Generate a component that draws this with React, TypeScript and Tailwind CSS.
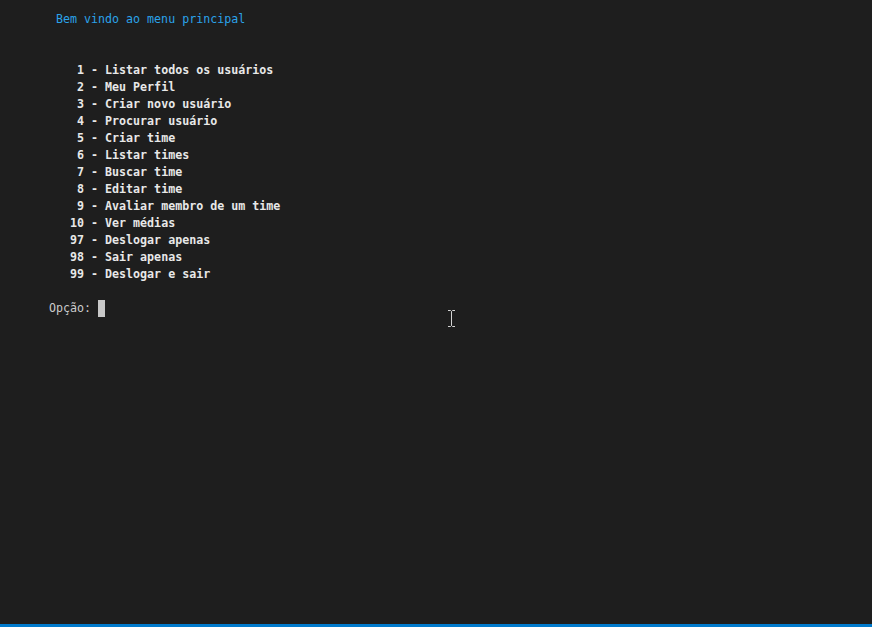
const items: [number, string][] = [
  [1, 'Listar todos os usuários'],
  [2, 'Meu Perfil'],
  [3, 'Criar novo usuário'],
  [4, 'Procurar usuário'],
  [5, 'Criar time'],
  [6, 'Listar times'],
  [7, 'Buscar time'],
  [8, 'Editar time'],
  [9, 'Avaliar membro de um time'],
  [10, 'Ver médias'],
  [97, 'Deslogar apenas'],
  [98, 'Sair apenas'],
  [99, 'Deslogar e sair'],
];

export default function App() {
  return (
    <div className="relative w-[872px] h-[627px] bg-[#1e1e1e] flex flex-col overflow-hidden">
      <div className="flex-1 pl-[49px] pt-[11px] font-['DejaVu_Sans_Mono',monospace] text-[11.65px] leading-[17px] whitespace-pre">
        <div className="pl-[7px] text-[#2ba3ea]">Bem vindo ao menu principal</div>
        <div className="h-[34px]" />
        {items.map(([n, label]) => (
          <div key={n} className="font-bold text-[#e8e8e8]">
            {String(n).padStart(5, ' ') + ' - ' + label}
          </div>
        ))}
        <div className="h-[17px]" />
        <div className="flex items-center text-[#cccccc]">
          <span>Opção: </span>
          <span className="inline-block w-[7px] h-[17px] bg-[#c8c8c8]" />
        </div>
      </div>
      <div className="h-[3px] bg-[#007acc]" />

      {/* mouse i-beam */}
      <svg className="absolute left-[447px] top-[310px]" width="9" height="17" viewBox="0 0 9 17">
        <path d="M1 0.5h2.5l1 1 1-1H8M1 16.5h2.5l1-1 1 1H8M4.5 1.5v14" stroke="#d4d4d4" strokeWidth="1" fill="none" />
      </svg>
    </div>
  );
}
